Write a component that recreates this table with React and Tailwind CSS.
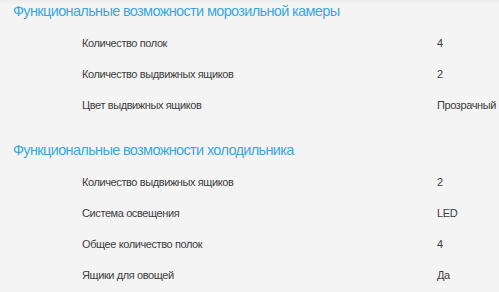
const SECTIONS = [
  {
    title: "Функциональные возможности морозильной камеры",
    rows: [
      ["Количество полок", "4"],
      ["Количество выдвижных ящиков", "2"],
      ["Цвет выдвижных ящиков", "Прозрачный"],
    ],
  },
  {
    title: "Функциональные возможности холодильника",
    rows: [
      ["Количество выдвижных ящиков", "2"],
      ["Система освещения", "LED"],
      ["Общее количество полок", "4"],
      ["Ящики для овощей", "Да"],
    ],
  },
];

function SpecRow({ label, value }) {
  return (
    <div className="grid h-[31px] grid-cols-[355px_1fr] items-center pl-[82px] text-[11px] tracking-[-0.4px] text-[#3d3d3d]">
      <span>{label}</span>
      <span className="whitespace-nowrap">{value}</span>
    </div>
  );
}

export default function App() {
  return (
    <div
      className="h-[292px] w-[499px] overflow-hidden bg-[#f4f4f4] bg-gradient-to-b from-[#ececec] to-[#f4f4f4] to-[4px]"
      style={{ fontFamily: '"Liberation Sans", Arial, sans-serif' }}
    >
      {SECTIONS.map((section) => (
        <section key={section.title} className="mb-[18px]">
          <h2 className="mb-[4px] h-[24px] whitespace-nowrap pl-[13px] text-[14.5px] leading-[23px] tracking-[-0.65px] text-[#3aa8df]">
            {section.title}
          </h2>
          {section.rows.map(([label, value]) => (
            <SpecRow key={label} label={label} value={value} />
          ))}
        </section>
      ))}
    </div>
  );
}
